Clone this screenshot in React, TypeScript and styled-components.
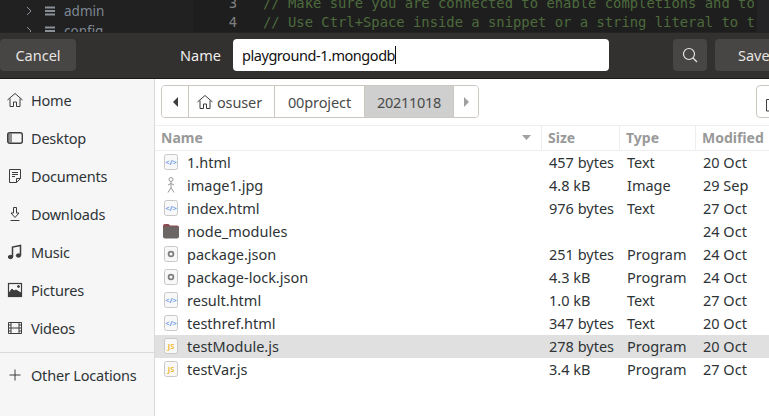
import React from 'react'
import styled, { createGlobalStyle } from 'styled-components'

const Global = createGlobalStyle`
  html, body { margin: 0; padding: 0; background: #fff; }
  body { font-family: "Noto Sans", "Open Sans", sans-serif; overflow: hidden; }
`

const Page = styled.div`
  width: 769px;
  height: 416px;
  display: flex;
  flex-direction: column;
  overflow: hidden;
`

const Backdrop = styled.div`
  height: 32px;
  flex: none;
  background: #1e1e1e;
  display: grid;
  grid-template-columns: 193px 1fr 12px;
  overflow: hidden;
`

const TreePane = styled.div`
  background: #212121;
  padding: 1px 0 0 26px;
  display: flex;
  flex-direction: column;
  color: #7f8794;
  font-size: 13.5px;
`

const TreeRow = styled.div`
  height: 20px;
  flex: none;
  display: flex;
  align-items: center;
`

const TreeIcon = styled.svg`
  flex: none;
  fill: none;
  stroke: #8a8f98;
`

const Chevron = styled(TreeIcon)`
  width: 6px;
  height: 10px;
  margin-right: 13px;
`

const DbIcon = styled(TreeIcon)`
  width: 10px;
  height: 12px;
  margin-right: 9px;
  stroke-width: 2;
`

const EditorPane = styled.div`
  display: flex;
  flex-direction: column;
  margin-top: -7px;
  font-family: "DejaVu Sans Mono", monospace;
  font-size: 13.85px;
  color: #4d6b3c;
  white-space: pre;
`

const CodeLine = styled.div`
  height: 19px;
  flex: none;
  display: flex;
  align-items: center;
`

const LineNo = styled.span`
  width: 44px;
  text-align: right;
  color: #808080;
  margin-right: 26px;
  flex: none;
`

const Minimap = styled.div`
  background: #242426;
`

const Header = styled.div`
  height: 47px;
  flex: none;
  background: #333030;
  border-top: 1px solid #242424;
  border-bottom: 1px solid #1a1a1a;
  box-sizing: border-box;
  display: flex;
  align-items: center;
  padding-bottom: 1px;
`

const HeaderButton = styled.div<{ $width: number }>`
  width: ${(p) => p.$width}px;
  height: 32px;
  flex: none;
  box-sizing: border-box;
  background: #484644;
  border-radius: 4px;
  color: #e6e4e1;
  font-size: 14.5px;
  padding-bottom: 1px;
  display: flex;
  align-items: center;
  justify-content: center;
`

const NameLabel = styled.div`
  margin-left: 104px;
  width: 48px;
  color: #eeeeec;
  font-size: 14.5px;
  padding-bottom: 1px;
`

const NameInput = styled.div`
  width: 376px;
  height: 32px;
  flex: none;
  box-sizing: border-box;
  margin-left: 5px;
  background: #fff;
  border-radius: 4px;
  color: #111;
  font-size: 14.5px;
  letter-spacing: -0.45px;
  padding: 0 0 1px 9px;
  display: flex;
  align-items: center;
`

const Caret = styled.span`
  width: 1px;
  height: 18px;
  background: #111;
`

const SearchButton = styled(HeaderButton)`
  margin-left: 64px;
  margin-right: 8px;
  padding-bottom: 0;
`

const SaveButton = styled(HeaderButton)`
  justify-content: flex-start;
  padding-left: 23px;
  margin-right: -30px;
`

const Body = styled.div`
  flex: 1;
  min-height: 0;
  display: flex;
`

const Sidebar = styled.div`
  width: 155px;
  flex: none;
  box-sizing: border-box;
  background: #f6f6f6;
  border-right: 1px solid #dcdad7;
  padding-top: 2px;
  display: flex;
  flex-direction: column;
`

const Place = styled.div`
  height: 38px;
  flex: none;
  display: flex;
  align-items: center;
  padding-left: 7px;
  gap: 8px;
  color: #2e3436;
  font-size: 14.5px;
  letter-spacing: -0.2px;
`

const SideIcon = styled.svg`
  width: 16px;
  height: 16px;
  flex: none;
  fill: none;
  stroke: #3d3d3d;
  stroke-width: 1;
`

const SideRule = styled.div`
  height: 1px;
  flex: none;
  background: #dcdad7;
  margin: 5px 0 3px;
`

const Main = styled.div`
  flex: 1;
  min-width: 0;
  background: #fff;
  padding-top: 6px;
  display: flex;
  flex-direction: column;
  overflow: hidden;
`

const PathRow = styled.div`
  height: 33px;
  flex: none;
  display: flex;
  justify-content: space-between;
  padding-left: 6px;
  margin-bottom: 7px;
`

const PathBar = styled.div`
  display: flex;
  box-sizing: border-box;
  height: 33px;
  border: 1px solid #cdc7c2;
  border-radius: 4px;
  overflow: hidden;
  font-size: 14.5px;
  color: #4a4a4a;
`

const PathSegment = styled.div<{ $active?: boolean; $width: number }>`
  width: ${(p) => p.$width}px;
  box-sizing: border-box;
  display: flex;
  align-items: center;
  justify-content: center;
  gap: 4px;
  letter-spacing: ${(p) => (p.$active ? '-0.3px' : '-0.1px')};
  background: ${(p) => (p.$active ? '#cfcfcf' : '#fff')};
  & + & {
    border-left: 1px solid #cdc7c2;
  }
`

const HomeSegment = styled(PathSegment)`
  padding-right: 4px;
`

const Arrow = styled.span<{ $dir: 'left' | 'right'; $dim?: boolean }>`
  width: 0;
  height: 0;
  border-top: 5px solid transparent;
  border-bottom: 5px solid transparent;
  ${(p) =>
    p.$dir === 'left'
      ? `border-right: 5px solid ${p.$dim ? '#a0a0a0' : '#3d3d3d'};`
      : `border-left: 5px solid ${p.$dim ? '#a0a0a0' : '#3d3d3d'};`}
`

const NewFolder = styled.div`
  width: 40px;
  box-sizing: border-box;
  height: 33px;
  border: 1px solid #cdc7c2;
  border-radius: 4px;
  margin-right: -27px;
  padding: 9px 0 0 8px;
`

const Grid = styled.div`
  display: grid;
  grid-template-columns: 386px 78px 76px 1fr;
`

const Columns = styled(Grid)`
  height: 26px;
  flex: none;
  box-sizing: border-box;
  border-top: 1px solid #eeeeee;
  border-bottom: 1px solid #eeeeee;
  color: #999999;
  font-size: 14px;
  font-weight: 700;
`

const ColumnHead = styled.div`
  display: flex;
  align-items: center;
  justify-content: space-between;
  padding: 0 10px 2px 6px;
  & + & {
    border-left: 1px solid #eeeeee;
  }
`

const Row = styled(Grid)<{ $selected?: boolean }>`
  height: 23px;
  flex: none;
  align-items: center;
  background: ${(p) => (p.$selected ? '#e0e0e0' : 'transparent')};
  color: #2e3436;
  font-size: 14.5px;
  padding-bottom: 1px;
  box-sizing: border-box;
`

const NameCell = styled.div`
  display: flex;
  align-items: center;
  gap: 8px;
  padding-left: 8px;
`

const Cell = styled.div`
  padding-left: 8px;
  white-space: nowrap;
`

const FileBox = styled.svg`
  width: 16px;
  height: 16px;
  flex: none;
`

const BadgeText = styled.text<{ $color: string }>`
  font-family: "Noto Sans", sans-serif;
  font-size: 7.5px;
  font-weight: 700;
  text-anchor: middle;
  fill: ${(p) => p.$color};
`

type Kind = 'html' | 'image' | 'folder' | 'json' | 'js'

const FileIcon = ({ kind }: { kind: Kind }) => {
  if (kind === 'image') {
    return (
      <FileBox viewBox="0 0 16 16" fill="none" stroke="#9a9a9a" strokeWidth="1">
        <circle cx="8" cy="2.500" r="2" />
        <path d="M8 4.500v6M5 8l3-1.500L11 8M8 10.500l-3 5M8 10.500l3 5" />
      </FileBox>
    )
  }
  if (kind === 'folder') {
    return (
      <FileBox viewBox="0 0 16 16">
        <path d="M0 3a2 2 0 0 1 2-2h3.500L7 2.500h7a2 2 0 0 1 2 2V7H0z" fill="#8d4a50" />
        <rect x="0" y="3.500" width="16" height="12" rx="2" fill="#6c6764" />
      </FileBox>
    )
  }
  return (
    <FileBox viewBox="0 0 16 16">
      <rect x="1.500" y=".5" width="13" height="15" rx="2" fill="#f8f8f8" stroke="#c8c8c8" />
      {kind === 'html' && (
        <BadgeText x="8" y="10.600" $color="#6f9be8">
          {'</>'}
        </BadgeText>
      )}
      {kind === 'json' && <circle cx="8" cy="8" r="2.400" fill="none" stroke="#808080" strokeWidth="1.800" />}
      {kind === 'js' && (
        <BadgeText x="8" y="10.600" $color="#f0bb35">
          JS
        </BadgeText>
      )}
    </FileBox>
  )
}

const files: { name: string; kind: Kind; size: string; type: string; date: string; selected?: boolean }[] = [
  { name: '1.html', kind: 'html', size: '457 bytes', type: 'Text', date: '20 Oct' },
  { name: 'image1.jpg', kind: 'image', size: '4.8 kB', type: 'Image', date: '29 Sep' },
  { name: 'index.html', kind: 'html', size: '976 bytes', type: 'Text', date: '27 Oct' },
  { name: 'node_modules', kind: 'folder', size: '', type: '', date: '24 Oct' },
  { name: 'package.json', kind: 'json', size: '251 bytes', type: 'Program', date: '24 Oct' },
  { name: 'package-lock.json', kind: 'json', size: '4.3 kB', type: 'Program', date: '24 Oct' },
  { name: 'result.html', kind: 'html', size: '1.0 kB', type: 'Text', date: '27 Oct' },
  { name: 'testhref.html', kind: 'html', size: '347 bytes', type: 'Text', date: '20 Oct' },
  { name: 'testModule.js', kind: 'js', size: '278 bytes', type: 'Program', date: '20 Oct', selected: true },
  { name: 'testVar.js', kind: 'js', size: '3.4 kB', type: 'Program', date: '27 Oct' },
]

const homePath = 'M.5 8 8 1.500 15.500 8M3 6.500V14.500h3.500V10h3v4.500H13V6.500'

const places: { label: string; icon: React.ReactNode }[] = [
  { label: 'Home', icon: <path d={homePath} /> },
  {
    label: 'Desktop',
    icon: (
      <>
        <path d="M1 3.500h4v9H1z" fill="#3d3d3d" stroke="none" opacity=".55" />
        <rect x=".7" y="2.700" width="14.600" height="10.600" rx="2" strokeWidth="1.400" />
      </>
    ),
  },
  { label: 'Documents', icon: <path d="M2.500 1.500h11v9l-4 4h-7zM13.500 10.500h-4v4M5 4.500h6M5 6.500h6M5 8.500h3" /> },
  { label: 'Downloads', icon: <path d="M6.500 1.500h3V7H12l-4 4.500L4 7h2.500zM3.500 14.500h9" /> },
  {
    label: 'Music',
    icon: (
      <>
        <path d="M5.500 13V3l8-1.500V11" strokeWidth="1.500" />
        <ellipse cx="3.500" cy="13" rx="2.200" ry="1.700" fill="#3d3d3d" />
        <ellipse cx="11.500" cy="11.500" rx="2.200" ry="1.700" fill="#3d3d3d" />
      </>
    ),
  },
  {
    label: 'Pictures',
    icon: (
      <>
        <rect x="1.500" y="1.500" width="13" height="13" strokeWidth="1.200" />
        <path d="M2 14v-3l3-4 2 2 2-1 5 3v3z" fill="#3d3d3d" />
        <circle cx="11.500" cy="4.500" r="1" fill="#3d3d3d" />
      </>
    ),
  },
  {
    label: 'Videos',
    icon: <path d="M1.500 2.500h13v11h-13zM4 2.500v11M12 2.500v11M1.500 5H4M1.500 8H4M1.500 11H4M12 5h2.500M12 8h2.500M12 11h2.500M4 8h8" />,
  },
]

const TreeItem = ({ label }: { label: string }) => (
  <TreeRow>
    <Chevron viewBox="0 0 6 10">
      <path d="m1 1 4 4-4 4" />
    </Chevron>
    <DbIcon viewBox="0 0 10 12">
      <path d="M0 2.500h10M0 6h10M0 9.500h10" />
    </DbIcon>
    {label}
  </TreeRow>
)

export default function App() {
  return (
    <Page>
      <Global />
      <Backdrop>
        <TreePane>
          <TreeItem label="admin" />
          <TreeItem label="config" />
        </TreePane>
        <EditorPane>
          <CodeLine>
            <LineNo>3</LineNo>// Make sure you are connected to enable completions and to
          </CodeLine>
          <CodeLine>
            <LineNo>4</LineNo>// Use Ctrl+Space inside a snippet or a string literal to t
          </CodeLine>
        </EditorPane>
        <Minimap />
      </Backdrop>
      <Header>
        <HeaderButton $width={76}>Cancel</HeaderButton>
        <NameLabel>Name</NameLabel>
        <NameInput>
          playground-1.mongodb
          <Caret />
        </NameInput>
        <SearchButton $width={34}>
          <svg width="16" height="16" viewBox="0 0 16 16" fill="none" stroke="#e6e4e1" strokeWidth="1.200">
            <circle cx="7" cy="7" r="5.500" />
            <path d="m11 11 4 4" />
          </svg>
        </SearchButton>
        <SaveButton $width={76}>Save</SaveButton>
      </Header>
      <Body>
        <Sidebar>
          {places.map((p) => (
            <Place key={p.label}>
              <SideIcon viewBox="0 0 16 16">{p.icon}</SideIcon>
              {p.label}
            </Place>
          ))}
          <SideRule />
          <Place>
            <SideIcon viewBox="0 0 16 16">
              <path d="M8 2.500v11M2.500 8h11" />
            </SideIcon>
            Other Locations
          </Place>
        </Sidebar>
        <Main>
          <PathRow>
            <PathBar>
              <PathSegment $width={26}>
                <Arrow $dir="left" />
              </PathSegment>
              <HomeSegment $width={86}>
                <SideIcon viewBox="0 0 16 16">
                  <path d={homePath} />
                </SideIcon>
                osuser
              </HomeSegment>
              <PathSegment $width={90}>00project</PathSegment>
              <PathSegment $width={89} $active>
                20211018
              </PathSegment>
              <PathSegment $width={25}>
                <Arrow $dir="right" $dim />
              </PathSegment>
            </PathBar>
            <NewFolder>
              <svg width="16" height="14" viewBox="0 0 16 14" fill="none" stroke="#3d3d3d">
                <path d="M1.500 13V1.500h5l1.500 2h6.500V13z" />
              </svg>
            </NewFolder>
          </PathRow>
          <Columns>
            <ColumnHead>
              Name
              <svg width="9" height="5" viewBox="0 0 9 5">
                <path d="M0 0h9L4.500 5z" fill="#a0a0a0" />
              </svg>
            </ColumnHead>
            <ColumnHead>Size</ColumnHead>
            <ColumnHead>Type</ColumnHead>
            <ColumnHead>Modified</ColumnHead>
          </Columns>
          <div>
            {files.map((f) => (
              <Row key={f.name} $selected={f.selected}>
                <NameCell>
                  <FileIcon kind={f.kind} />
                  {f.name}
                </NameCell>
                <Cell>{f.size}</Cell>
                <Cell>{f.type}</Cell>
                <Cell>{f.date}</Cell>
              </Row>
            ))}
          </div>
        </Main>
      </Body>
    </Page>
  )
}
